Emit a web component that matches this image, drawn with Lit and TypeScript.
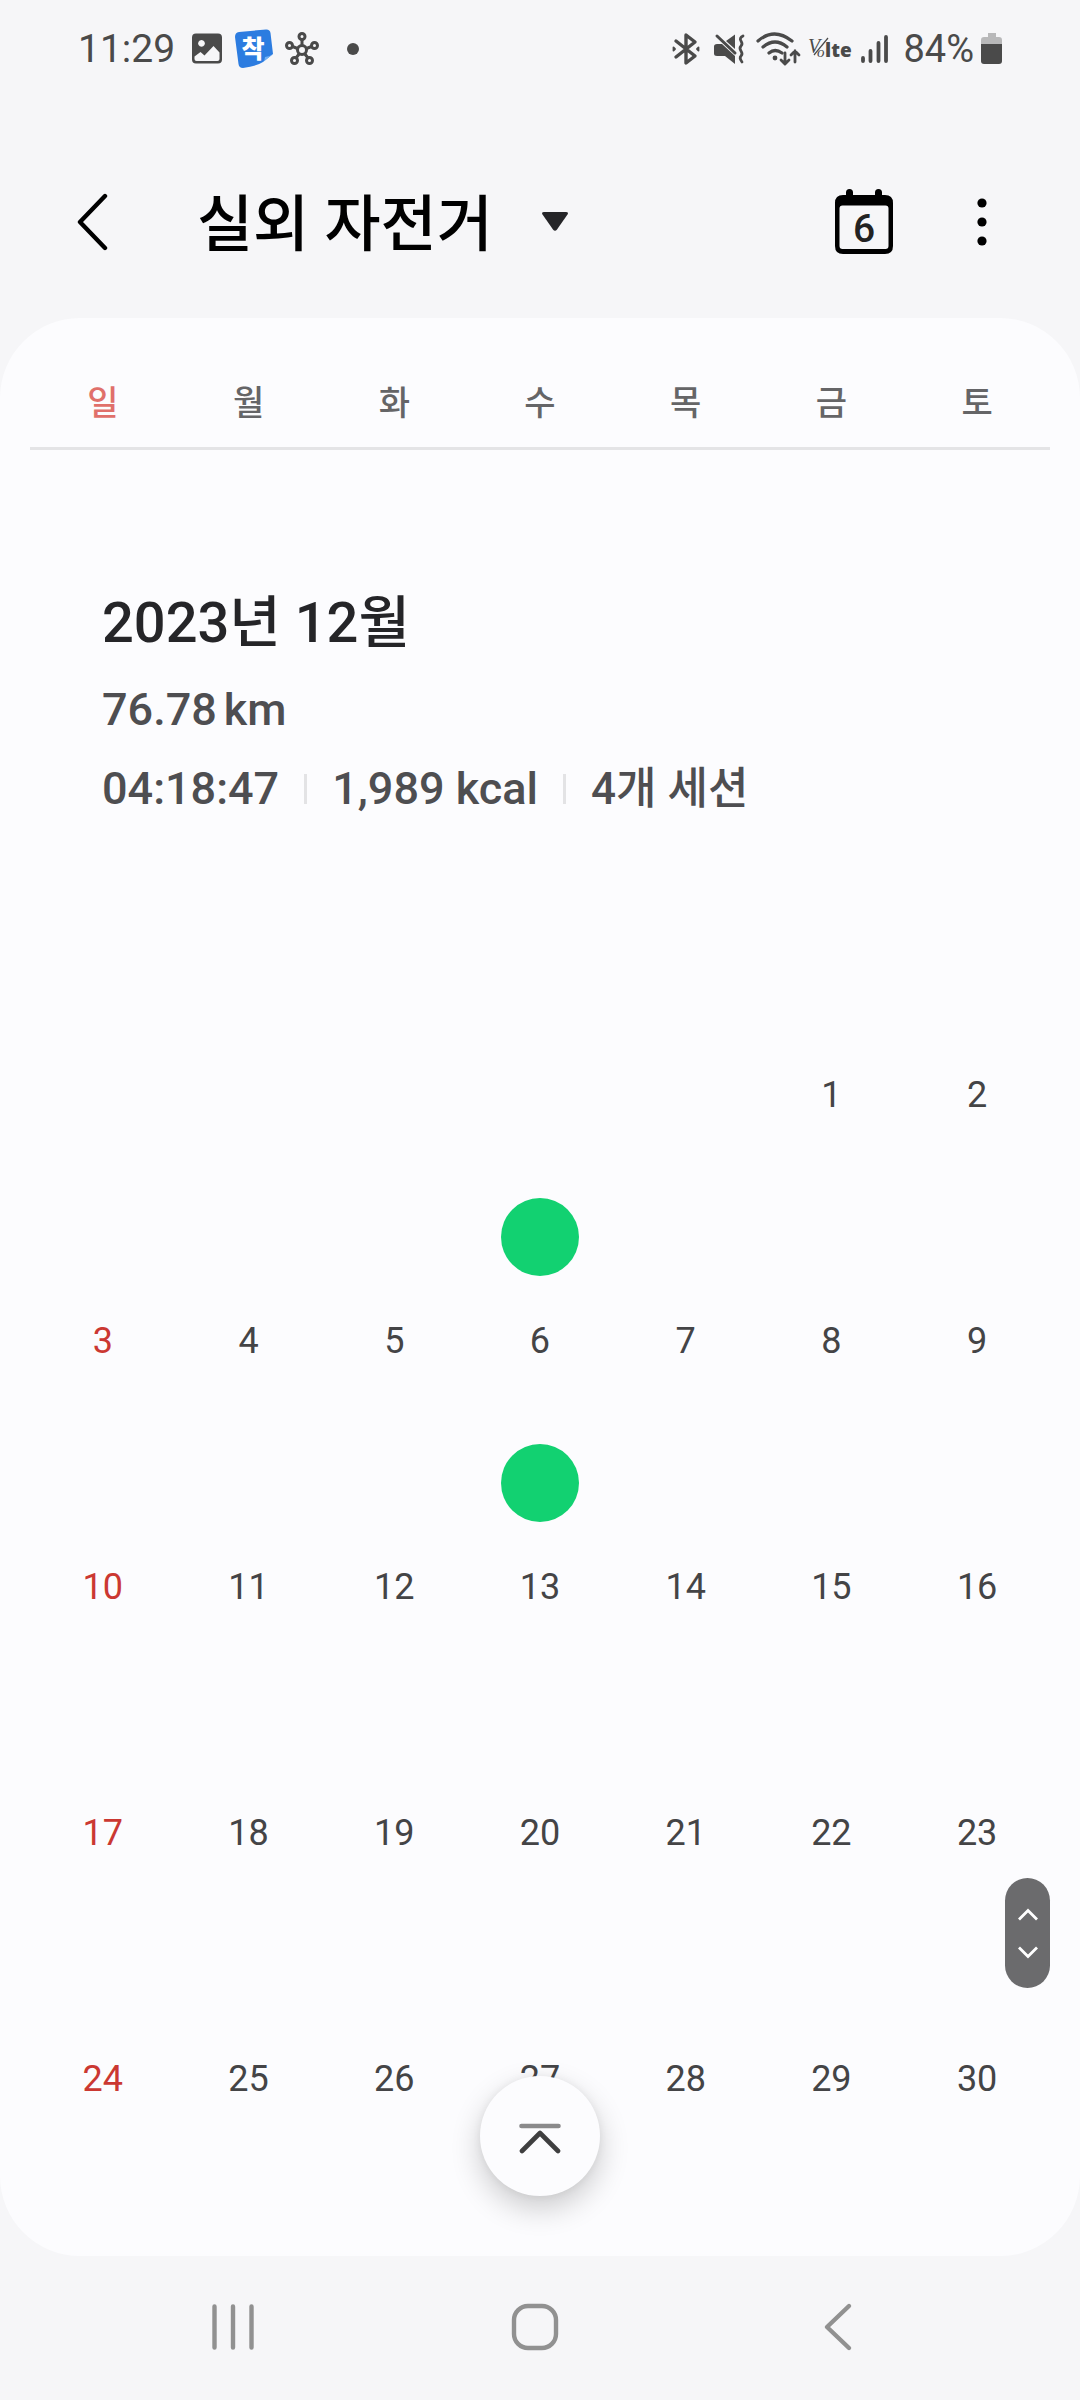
import { LitElement, html, css, svg, nothing } from "lit";
import { customElement, property, state } from "lit/decorators.js";
import { classMap } from "lit/directives/class-map.js";

const WEEKDAYS = ["일", "월", "화", "수", "목", "금", "토"];

@customElement("status-bar")
class StatusBar extends LitElement {
  static styles = css`
    :host {
      display: flex;
      justify-content: space-between;
      align-items: center;
      height: 98px;
      padding: 0 77px 0 78px;
      color: #4a4a4a;
      font-size: 39px;
      line-height: 44px;
      font-weight: 400;
    }
    .group {
      display: flex;
      align-items: center;
    }
    svg {
      display: block;
      flex: none;
      overflow: visible;
    }
    .left {
      gap: 12px;
    }
    .icons {
      display: flex;
      align-items: center;
      gap: 12px;
      padding-left: 4px;
    }
    .dot {
      margin-left: 16px;
    }
    .right {
      gap: 10px;
    }
    .level {
      display: flex;
      align-items: center;
      gap: 7px;
      font-size: 38px;
    }
    .glyph {
      font-family: "Noto Sans CJK KR", sans-serif;
      font-weight: 900;
      font-size: 25px;
    }
    .script {
      font-family: "Liberation Serif", serif;
      font-style: italic;
    }
    .lte {
      font-family: "Open Sans", sans-serif;
      font-weight: 800;
      font-size: 19px;
    }
  `;

  render() {
    return html`
      <div class="group left">
        <span>11:29</span>
        <span class="icons">
          <svg width="32" height="32" viewBox="0 0 32 32" aria-hidden="true">
            <path
              fill="currentColor"
              fill-rule="evenodd"
              d="M5 0.500h22a4 4 0 0 1 4 4v22a4 4 0 0 1-4 4H5a4 4 0 0 1-4-4v-22a4 4 0 0 1 4-4zM10.500 7a3.400 3.400 0 1 0 .01 0zM3.500 23.500v2.500q0 2 2 2h21q2 0 2-2v-6.500l-6-6.500-9 9.500-4-3.500z"
            />
          </svg>
          <svg width="38" height="40" viewBox="0 0 38 40" aria-hidden="true">
            <path fill="#2c7ce0" d="M4 3 31 0.500q4-.2 4.500 3.500L38 25 28 33q-6 4-20 6-4 0-4.500-4L0 8q0-4.500 4-5z" />
            <path fill="#6fb0f5" d="M38 25 28 33q2-2 2-5 4 0 8-3z" />
            <text class="glyph" x="18" y="29" text-anchor="middle" fill="#fff">착</text>
          </svg>
          <svg width="34" height="34" viewBox="0 0 34 34" fill="none" stroke="currentColor" stroke-width="3" aria-hidden="true">
            <circle cx="17" cy="18" r="4.500" />
            <circle cx="17" cy="4.500" r="3" />
            <circle cx="4.500" cy="13.500" r="3" />
            <circle cx="29.500" cy="13.500" r="3" />
            <circle cx="9.500" cy="28.500" r="3" />
            <circle cx="24.500" cy="28.500" r="3" />
            <path d="M17 7.500v6M7.500 14.500l5 2M26.500 14.500l-5 2M11 26l3.500-4.500M23 26l-3.500-4.500" />
          </svg>
          <svg class="dot" width="12" height="12" viewBox="0 0 12 12" aria-hidden="true">
            <circle cx="6" cy="6" r="6" fill="currentColor" />
          </svg>
        </span>
      </div>
      <div class="group right">
        <svg width="32" height="34" viewBox="0 0 32 34" fill="none" stroke="currentColor" stroke-width="3.400" stroke-linejoin="round" stroke-linecap="round" aria-hidden="true">
          <path d="M5 9 24 24 15 31V3l9 7L5 25" />
          <path d="M2.500 15.500v3l1.500-1.500zM27.500 15.500v3L26 17z" stroke-width="1.800" fill="currentColor" />
        </svg>
        <svg width="33" height="34" viewBox="0 0 33 34" aria-hidden="true">
          <path fill="currentColor" d="M4 12h5l13 12v8l-10-8H4q-3 0-3-2.500v-7Q1 12 4 12zM22 2.500V17l-9-8z" />
          <path d="M4 4 22 21" stroke="currentColor" stroke-width="3" stroke-linecap="round" />
          <path d="M30 4q-4 2-2 5t0 5 0 5 0 5 1 6" fill="none" stroke="currentColor" stroke-width="2.800" stroke-linecap="round" />
        </svg>
        <svg width="42" height="34" viewBox="0 0 42 34" fill="none" stroke="currentColor" stroke-width="3.200" stroke-linecap="round" aria-hidden="true">
          <path d="M2 9q16-14 34 0M7 15q12-10 24 0M13 21q6-5 13 0" />
          <circle cx="19" cy="26" r="2.400" fill="currentColor" stroke="none" />
          <path d="M29 21v11M25 28l4 4 4-4M39 30V19M35 23l4-4 4 4" stroke-width="2.800" />
        </svg>
        <svg width="43" height="30" viewBox="0 0 43 30" fill="currentColor" role="img" aria-label="VoLTE">
          <text class="script" x="0" y="19" font-size="20">V</text>
          <text class="script" x="9" y="23" font-size="15">o</text>
          <path d="M20 4 6 21" stroke="currentColor" stroke-width="1.200" />
          <text class="lte" x="17" y="23">lte</text>
        </svg>
        <svg width="32" height="30" viewBox="0 0 32 30" stroke="currentColor" stroke-width="3.800" stroke-linecap="round" aria-hidden="true">
          <path d="M2 24v3M9.500 17v10M17.500 9v18M25 3v24" />
        </svg>
        <span class="level">
          <span>84%</span>
          <svg width="22" height="32" viewBox="0 0 22 32" aria-hidden="true">
            <path fill="#b8b8b9" d="M7 0h8v4h3q3 0 3 3v5H0V7q0-3 3-3h4z" />
            <path fill="currentColor" d="M0 11h21v17q0 3-3 3H3q-3 0-3-3z" />
          </svg>
        </span>
      </div>
    `;
  }
}

@customElement("page-header")
class PageHeader extends LitElement {
  @property() heading = "";
  @property({ type: Number }) today = 1;

  static styles = css`
    :host {
      display: flex;
      align-items: center;
      justify-content: space-between;
      height: 192px;
      padding: 28px 60px 0 55px;
      color: #000;
    }
    .group {
      display: flex;
      align-items: center;
    }
    .actions {
      gap: 42px;
    }
    button {
      display: flex;
      align-items: center;
      justify-content: center;
      border: 0;
      padding: 0;
      margin: 0;
      background: none;
      color: inherit;
      font: inherit;
      min-width: 76px;
      height: 96px;
    }
    h1 {
      margin: 0 0 0 66px;
      font-size: 61px;
      line-height: 72px;
      font-weight: 500;
      white-space: nowrap;
    }
    .picker {
      gap: 48px;
    }
    .name {
      padding-top: 6px;
    }
    svg {
      display: block;
    }
    .date {
      font-size: 39px;
      font-weight: 500;
    }
  `;

  render() {
    return html`
      <div class="group">
        <button aria-label="뒤로">
          <svg width="32" height="60" viewBox="0 0 32 60" fill="none" stroke="currentColor" stroke-width="4.400" stroke-linecap="round" stroke-linejoin="round">
            <path d="M28 4 3 30l25 26" />
          </svg>
        </button>
        <h1>
          <button class="picker">
            <span class="name">${this.heading}</span>
            <svg width="28" height="22" viewBox="0 0 28 22" fill="#252528" aria-hidden="true">
              <path d="M3 1h22q3 0 1.500 2.500l-10.500 15q-2 2.500-4 0L1.500 3.500Q0 1 3 1z" />
            </svg>
          </button>
        </h1>
      </div>
      <div class="group actions">
        <button aria-label="오늘">
          <svg width="60" height="66" viewBox="0 0 60 66">
            <path
              fill="currentColor"
              fill-rule="evenodd"
              d="M12 6V3.500a3.500 3.500 0 0 1 7 0V6h22V3.500a3.500 3.500 0 0 1 7 0V6h3q8 0 8 8v43q0 8-8 8H9q-8 0-8-8V14q0-8 8-8zM8.500 16.500q-3 0-3 3V57q0 3 3 3h43q3 0 3-3V19.500q0-3-3-3z"
            />
            <text class="date" x="30" y="53" text-anchor="middle" fill="#222">${this.today}</text>
          </svg>
        </button>
        <button aria-label="더보기">
          <svg width="10" height="50" viewBox="0 0 10 50" fill="currentColor">
            <circle cx="5" cy="6" r="4.600" />
            <circle cx="5" cy="25" r="4.600" />
            <circle cx="5" cy="44" r="4.600" />
          </svg>
        </button>
      </div>
    `;
  }
}

@customElement("month-calendar")
class MonthCalendar extends LitElement {
  /** Column of the first day, 0 = Sunday. */
  @property({ type: Number }) offset = 0;
  @property({ type: Number }) last = 30;
  @property({ attribute: false }) active: number[] = [];
  @state() private selected = 0;

  static styles = css`
    :host {
      display: block;
      padding: 0 30px;
    }
    table {
      width: 100%;
      table-layout: fixed;
      border-collapse: collapse;
    }
    td {
      height: 246px;
      padding: 0;
      vertical-align: bottom;
    }
    button {
      display: flex;
      flex-direction: column;
      align-items: center;
      gap: 43px;
      width: 100%;
      border: 0;
      padding: 0 0 20px;
      background: none;
      color: #444446;
      font: inherit;
      font-size: 36px;
      line-height: 44px;
    }
    .mark {
      width: 78px;
      height: 78px;
      border-radius: 50%;
      background: #12d171;
    }
    .sunday {
      color: #cb3832;
    }
  `;

  private get weeks() {
    const cells = Array.from({ length: this.offset + this.last }, (_, i) => Math.max(0, i - this.offset + 1));
    const rows: number[][] = [];
    for (let i = 0; i < cells.length; i += 7) rows.push(cells.slice(i, i + 7));
    return rows;
  }

  render() {
    return html`
      <table>
        <tbody>
          ${this.weeks.map(
            (week) => html`<tr>
              ${week.map(
                (day, column) => html`<td>
                  ${day
                    ? html`<button
                        class=${classMap({ sunday: column === 0 })}
                        aria-pressed=${this.selected === day ? "true" : "false"}
                        @click=${() => (this.selected = day)}
                      >
                        ${this.active.includes(day) ? html`<span class="mark"></span>` : nothing}
                        <span>${day}</span>
                      </button>`
                    : nothing}
                </td>`
              )}
            </tr>`
          )}
        </tbody>
      </table>
    `;
  }
}

@customElement("nav-bar")
class NavBar extends LitElement {
  static styles = css`
    :host {
      display: flex;
      justify-content: space-between;
      align-items: center;
      height: 144px;
      padding: 0 182px 0 173px;
      color: #919191;
    }
    button {
      display: flex;
      justify-content: center;
      align-items: center;
      width: 120px;
      height: 96px;
      margin-bottom: 2px;
      border: 0;
      padding: 0;
      background: none;
      color: inherit;
    }
  `;

  private icon(label: string, shape: unknown) {
    return html`<button aria-label=${label}>
      <svg width="52" height="52" viewBox="0 0 52 52" fill="none" stroke="currentColor" stroke-width="4.400" stroke-linecap="round" stroke-linejoin="round">
        ${shape}
      </svg>
    </button>`;
  }

  render() {
    return html`
      ${this.icon("최근 앱", svg`<path d="M7.500 5.500v41M26 5.500v41M44.500 5.500v41" />`)}
      ${this.icon("홈", svg`<rect x="4" y="5" width="42" height="42" rx="14" />`)}
      ${this.icon("뒤로", svg`<path d="M37 5 15 26l22 21" />`)}
    `;
  }
}

@customElement("app-root")
class AppRoot extends LitElement {
  static styles = css`
    :host {
      display: flex;
      flex-direction: column;
      min-height: 100vh;
      background: #f6f6f8;
      font-family: Roboto, "Noto Sans CJK KR", sans-serif;
    }
    .card {
      position: relative;
      flex: 1;
      border-radius: 80px;
      background: #fcfcfe;
      padding-bottom: 135px;
    }
    .weekdays {
      display: grid;
      grid-template-columns: repeat(7, 1fr);
      margin: 0 30px;
      padding: 61px 0 20px;
      border-bottom: 3px solid #e4e4e6;
      list-style: none;
      text-align: center;
      font-size: 34px;
      line-height: 48px;
      font-weight: 500;
      color: #656567;
    }
    .sunday {
      color: #e0706b;
    }
    .summary {
      display: flex;
      flex-direction: column;
      gap: 19px;
      padding: 135px 102px 72px;
      color: #4e4e51;
      font-size: 45px;
      line-height: 60px;
      font-weight: 500;
    }
    h2 {
      margin: 0;
      font-size: 56px;
      line-height: 76px;
      font-weight: 500;
      color: #252528;
    }
    p {
      margin: 0;
    }
    .distance {
      display: flex;
      gap: 7px;
    }
    .details {
      display: flex;
      align-items: center;
    }
    .details span + span::before {
      content: "";
      display: inline-block;
      width: 3px;
      height: 30px;
      margin: 0 25px;
      background: #e3e3e5;
    }
    .details .sessions {
      font-size: 44px;
    }
    .scroller {
      position: absolute;
      right: 30px;
      bottom: 268px;
      display: flex;
      flex-direction: column;
      align-items: center;
      justify-content: center;
      width: 45px;
      height: 110px;
      border: 0;
      border-radius: 24px;
      padding: 0;
      background: #6b6b6d;
    }
    .top {
      position: absolute;
      left: calc(50% - 60px);
      bottom: 60px;
      display: flex;
      align-items: center;
      justify-content: center;
      width: 120px;
      height: 120px;
      border: 0;
      border-radius: 50%;
      padding: 0;
      background: #fcfcfe;
      box-shadow: 0 12px 30px rgba(0, 0, 0, 0.2), 0 0 8px rgba(0, 0, 0, 0.06);
    }
  `;

  render() {
    return html`
      <status-bar></status-bar>
      <page-header heading="실외 자전거" .today=${6}></page-header>
      <main class="card">
        <ul class="weekdays">
          ${WEEKDAYS.map((name, i) => html`<li class=${classMap({ sunday: i === 0 })}>${name}</li>`)}
        </ul>
        <section class="summary">
          <h2>2023년 12월</h2>
          <p class="distance"><span>76.78</span><span>km</span></p>
          <p class="details"><span>04:18:47</span><span>1,989 kcal</span><span class="sessions">4개 세션</span></p>
        </section>
        <month-calendar .offset=${5} .last=${30} .active=${[6, 13]}></month-calendar>
        <button class="scroller" aria-label="스크롤">
          <svg width="22" height="54" viewBox="0 0 22 54" fill="none" stroke="#fff" stroke-width="2.800">
            <path d="M2 13.500 11 4.500l9 9M2 41.500l9 9 9-9" />
          </svg>
        </button>
        <button class="top" aria-label="맨 위로">
          <svg width="44" height="36" viewBox="0 0 44 36" fill="none" stroke-width="4.600" stroke-linecap="round" stroke-linejoin="round">
            <path d="M3.500 8h37" stroke="#8a8a8b" />
            <path d="M4 33 22 15l18 18" stroke="#3f3f40" />
          </svg>
        </button>
      </main>
      <nav-bar></nav-bar>
    `;
  }
}
